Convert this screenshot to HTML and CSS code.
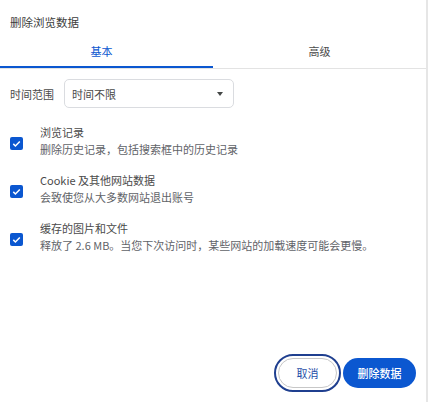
FILE: index.html
```html
<!DOCTYPE html>
<html lang="zh-CN">
<head>
<meta charset="utf-8">
<title>删除浏览数据</title>
<link rel="stylesheet" href="styles.css">
</head>
<body>
<div class="dialog">
  <div class="title">删除浏览数据</div>
  <div class="tabs">
    <div class="tab active">基本</div>
    <div class="tab">高级</div>
  </div>
  <div class="range-row">
    <span class="range-label">时间范围</span>
    <div class="select">
      <span>时间不限</span>
      <span class="arrow"></span>
    </div>
  </div>
  <div class="items">
    <div class="item">
      <span class="checkbox"><svg viewBox="0 0 13 13" width="13" height="13"><path d="M3.3 6.9 L5.4 9 L9.8 4.4" fill="none" stroke="#fff" stroke-width="1.5"/></svg></span>
      <div class="item-text">
        <div class="item-title">浏览记录</div>
        <div class="item-sub">删除历史记录，包括搜索框中的历史记录</div>
      </div>
    </div>
    <div class="item">
      <span class="checkbox"><svg viewBox="0 0 13 13" width="13" height="13"><path d="M3.3 6.9 L5.4 9 L9.8 4.4" fill="none" stroke="#fff" stroke-width="1.5"/></svg></span>
      <div class="item-text">
        <div class="item-title">Cookie 及其他网站数据</div>
        <div class="item-sub">会致使您从大多数网站退出账号</div>
      </div>
    </div>
    <div class="item">
      <span class="checkbox"><svg viewBox="0 0 13 13" width="13" height="13"><path d="M3.3 6.9 L5.4 9 L9.8 4.4" fill="none" stroke="#fff" stroke-width="1.5"/></svg></span>
      <div class="item-text">
        <div class="item-title">缓存的图片和文件</div>
        <div class="item-sub">释放了 2.6 MB。当您下次访问时，某些网站的加载速度可能会更慢。</div>
      </div>
    </div>
  </div>
  <div class="actions">
    <button class="btn btn-cancel">取消</button>
    <button class="btn btn-primary">删除数据</button>
  </div>
</div>
</body>
</html>
```

FILE: styles.css
```css
html, body {
  margin: 0;
  padding: 0;
  background: #ffffff;
}

body {
  font-family: "Noto Sans CJK SC", "Noto Sans", sans-serif;
  color: #202124;
}

.dialog {
  width: 426px;
  height: 402px;
  border-right: 2px solid #e6e6e6;
  display: flex;
  flex-direction: column;
  box-sizing: content-box;
}

.title {
  font-size: 11.5px;
  line-height: 16px;
  padding: 14px 0 0 10px;
  color: #3c3c3c;
}

.tabs {
  display: flex;
  margin-top: 6px;
  border-bottom: 1px solid #e3e3e3;
}

.tab {
  flex: 1 1 0;
  position: relative;
  text-align: center;
  font-size: 11px;
  line-height: 30px;
  height: 32px;
  color: #4a4a4a;
}

.tab.active {
  color: #0b57d0;
  text-indent: -10px;
}

.tab.active::after {
  content: "";
  position: absolute;
  left: 0;
  right: 0;
  bottom: 0;
  height: 2px;
  background: #0b57d0;
}

.range-row {
  display: flex;
  align-items: center;
  margin-top: 10px;
  padding-left: 10px;
}

.range-label {
  font-size: 11px;
  line-height: 16px;
  color: #4a4a4a;
  width: 54px;
}

.select {
  width: 170px;
  height: 29px;
  box-sizing: border-box;
  border: 1px solid #dadce0;
  border-radius: 5px;
  display: flex;
  align-items: center;
  justify-content: space-between;
  padding: 0 10px 0 7px;
  font-size: 11px;
  color: #4a4a4a;
}

.arrow {
  width: 0;
  height: 0;
  border-left: 3px solid transparent;
  border-right: 3px solid transparent;
  border-top: 4px solid #444746;
  margin-top: 1px;
}

.items {
  display: flex;
  flex-direction: column;
  gap: 14px;
  margin-top: 16px;
}

.item {
  display: flex;
  align-items: center;
  padding-left: 10px;
}

.checkbox {
  width: 13px;
  height: 13px;
  border-radius: 2px;
  background: #0b57d0;
  display: block;
  flex: none;
  margin-top: 4px;
}

.checkbox svg {
  display: block;
}

.item-text {
  margin-left: 17px;
}

.item-title {
  font-size: 11px;
  line-height: 17px;
  color: #4a4a4a;
}

.item-sub {
  font-size: 11px;
  line-height: 17px;
  color: #5f6368;
}

.actions {
  margin-top: auto;
  display: flex;
  justify-content: flex-end;
  gap: 6px;
  padding: 0 10px 13px 0;
}

.btn {
  font-family: "Noto Sans CJK SC", "Noto Sans", sans-serif;
  font-size: 11px;
  height: 30px;
  border-radius: 15px;
  padding: 0;
  cursor: pointer;
}

.btn-cancel {
  width: 59px;
  background: #ffffff;
  color: #1f4ea8;
  border: 1px solid #c7c7c7;
  outline: 2px solid #1f3f8f;
  outline-offset: 2px;
  margin-bottom: 1px;
}

.btn-primary {
  width: 73px;
  background: #0b57d0;
  color: #ffffff;
  border: none;
  font-weight: 500;
}
```
